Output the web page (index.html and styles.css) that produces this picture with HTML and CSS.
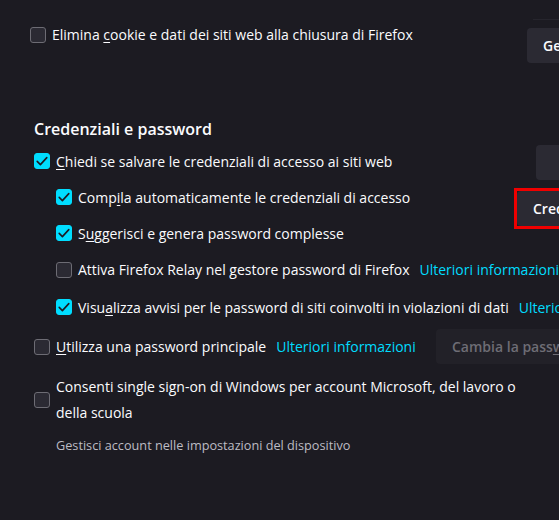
FILE: index.html
```html
<!DOCTYPE html>
<html lang="it">
<head>
<meta charset="utf-8">
<title>Impostazioni</title>
<link rel="stylesheet" href="styles.css">
</head>
<body>
<div class="page">
  <div class="top-strip"><div class="top-line"></div></div>

  <div class="row row-cookie">
    <span class="cb"></span>
    <span class="label">Elimina <u>c</u>ookie e dati dei siti web alla chiusura di Firefox</span>
    <button class="btn btn-ge">Gestisci dati…</button>
  </div>

  <section class="creds">
    <h2 class="heading">Credenziali e password</h2>
    <div class="cred-grid">
      <div class="crow r1">
        <span class="cb on"><svg viewBox="0 0 16 16"><polyline points="3.2,8.4 6.4,11.6 12.8,4.6"/></svg></span>
        <span class="label"><u>C</u>hiedi se salvare le credenziali di accesso ai siti web</span>
      </div>
      <div class="side">
        <button class="btn btn-exc">Eccezioni…</button>
        <div class="highlight"><button class="btn btn-cred">Credenziali salvate…</button></div>
      </div>
      <div class="crow sub r2">
        <span class="cb on"><svg viewBox="0 0 16 16"><polyline points="3.2,8.4 6.4,11.6 12.8,4.6"/></svg></span>
        <span class="label">Comp<u>i</u>la automaticamente le credenziali di accesso</span>
      </div>
      <div class="crow sub r3">
        <span class="cb on"><svg viewBox="0 0 16 16"><polyline points="3.2,8.4 6.4,11.6 12.8,4.6"/></svg></span>
        <span class="label">S<u>u</u>ggerisci e genera password complesse</span>
      </div>
      <div class="crow sub wide r4">
        <span class="cb"></span>
        <span class="label">Attiva Firefox Relay nel gestore password di Firefox</span>
        <a class="link">Ulteriori informazioni</a>
      </div>
      <div class="crow sub wide r5">
        <span class="cb on"><svg viewBox="0 0 16 16"><polyline points="3.2,8.4 6.4,11.6 12.8,4.6"/></svg></span>
        <span class="label">Visu<u>a</u>lizza avvisi per le password di siti coinvolti in violazioni di dati</span>
        <a class="link">Ulteriori informazioni</a>
      </div>
    </div>

    <div class="row row-primary">
      <span class="cb"></span>
      <span class="label"><u>U</u>tilizza una password principale</span>
      <a class="link">Ulteriori informazioni</a>
      <button class="btn btn-change" disabled>Cambia la pass<u>w</u>ord principale…</button>
    </div>

    <div class="row row-sso">
      <span class="cb"></span>
      <span class="label label-wrap">Consenti single sign-on di Windows per account Microsoft, del lavoro o della scuola</span>
    </div>
    <div class="note">Gestisci account nelle impostazioni del dispositivo</div>
  </section>
</div>
</body>
</html>
```
FILE: styles.css
```css
html, body {
  margin: 0;
  padding: 0;
  background: #1c1b22;
  overflow: hidden;
}
body {
  font-family: "Open Sans", "Noto Sans", sans-serif;
  font-size: 14px;
  color: #fbfbfe;
}
.page {
  width: 760px;
}
u {
  text-decoration-thickness: 1px;
  text-underline-offset: 2px;
}
.top-strip {
  height: 20px;
}
.top-line {
  margin-left: 533px;
  padding-top: 19px;
  border-bottom: 1px solid #26252d;
}

/* generic checkbox */
.cb {
  flex: 0 0 auto;
  box-sizing: border-box;
  width: 16px;
  height: 16px;
  border-radius: 3px;
  background: #2b2a33;
  border: 1px solid #6d6c74;
  display: inline-flex;
}
.cb.on {
  background: #00ddff;
  border-color: #00ddff;
}
.cb svg {
  width: 16px;
  height: 16px;
  margin: -1px;
  fill: none;
  stroke: #1c1b22;
  stroke-width: 1.6;
  stroke-linecap: round;
  stroke-linejoin: round;
}
.label {
  white-space: nowrap;
  margin-left: 6px;
}
.link {
  color: #00ddff;
  white-space: nowrap;
  margin-left: 10px;
}

/* buttons */
.btn {
  flex: 0 0 auto;
  box-sizing: border-box;
  height: 35px;
  border: none;
  border-radius: 4px;
  background: #2b2a33;
  color: #fbfbfe;
  font-family: "Open Sans", "Noto Sans", sans-serif;
  font-size: 14px;
  font-weight: 600;
  text-align: left;
  padding: 0 16px;
  white-space: nowrap;
  margin-left: auto;
}
.btn-ge { width: 233px; margin-top: 1px; }
.btn-exc { width: 224px; color: transparent; }
.highlight {
  border: 3px solid #f00000;
  display: flex;
}
.btn-cred { width: 240px; display: block; }
.btn-change {
  width: 324px;
  background: #222128;
  color: #6e6d75;
}
.btn-change u { text-decoration-color: #6e6d75; }

/* rows */
.row {
  display: flex;
}
.row-cookie {
  margin-top: 7px;
  margin-left: 30px;
  align-items: flex-start;
}
.row-cookie .label {
  line-height: 16px;
}

.creds {
  padding-left: 34px;
}
.heading {
  margin: 55px 0 3px;
  font-size: 16px;
  font-weight: 600;
  line-height: 22px;
}
.cred-grid {
  display: grid;
  grid-template-columns: 1fr auto;
}
.crow {
  display: flex;
  align-items: center;
  height: 36px;
  grid-column: 1;
}
.crow.sub {
  padding-left: 22px;
}
.crow.wide {
  grid-column: 1 / -1;
}
.r1 { grid-row: 1; }
.r2 { grid-row: 2; }
.r3 { grid-row: 3; }
.r4 { grid-row: 4; height: 37px; }
.r5 { grid-row: 5; margin-top: 1px; }
.side {
  grid-column: 2;
  grid-row: 1 / 4;
  align-self: start;
  display: flex;
  flex-direction: column;
  align-items: flex-end;
  gap: 8px;
  margin-top: 2px;
}

.row-primary {
  align-items: center;
  height: 35px;
  margin-top: 4px;
}
.row-sso {
  align-items: center;
  margin-top: 10px;
}
.label-wrap {
  white-space: normal;
  width: 485px;
  line-height: 26px;
}
.note {
  margin: 10px 0 0 22px;
  font-size: 12.7px;
  line-height: 18px;
  color: #bcbcc4;
}
```
